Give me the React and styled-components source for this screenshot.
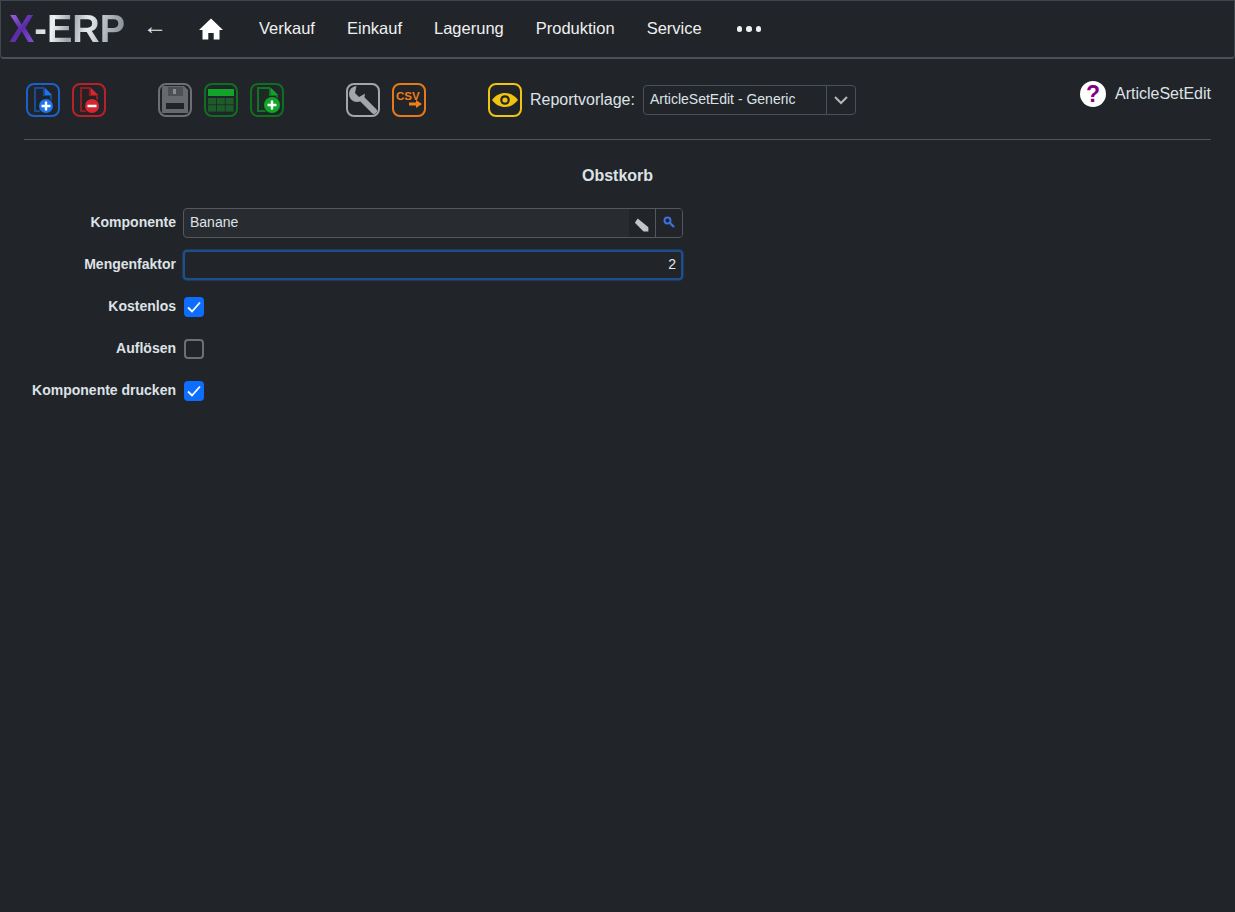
import React from 'react'
import styled, { createGlobalStyle } from 'styled-components'

const GlobalStyle = createGlobalStyle`
  html, body {
    margin: 0;
    padding: 0;
    min-height: 100%;
    background: #212529;
  }
  body {
    font-family: "Liberation Sans", Arial, sans-serif;
    color: #dee2e6;
  }
  * { box-sizing: border-box; }
`

const ICON_BG = '#212529'

// document with a round badge in the lower right corner
const DocIcon = ({ color, dim, inner, sign, left = 6, right = 24, cy = 21, r = 7 }) => {
  const cx = right - 6
  const foldX = right - 8
  return (
    <svg width="30" height="30" viewBox="0 0 30 30">
      <path d={`M${left} 2H${foldX}L${right} 10V27H${left}z`} fill={dim} />
      <path d={`M${left + 2} 4H${foldX - 1}V11H${right - 2}V17H${left + 9}V25H${left + 2}z`} fill={inner} />
      <path d={`M${foldX + 1} 3 ${right} 10H${foldX + 1}z`} fill={color} />
      <circle cx={cx} cy={cy} r={r + 1} fill={ICON_BG} />
      <circle cx={cx} cy={cy} r={r} fill={color} />
      <path d={`M${cx - 4.5} ${cy}h9`} stroke="#fff" strokeWidth="2.400" />
      {sign === 'plus' && <path d={`M${cx} ${cy - 4.5}v9`} stroke="#fff" strokeWidth="2.400" />}
    </svg>
  )
}

const SaveIcon = () => (
  <svg width="30" height="30" viewBox="0 0 30 30">
    <path d="M2 1h22l4 4v23H2z" fill="#66696d" />
    <path d="M8 2h15v9H8z" fill="#4e5054" />
    <path d="M13 4h3v5h-3z" fill="#8a8c90" />
    <path d="M6 18h18v6H6z" fill="#212529" />
  </svg>
)

const TableIcon = () => (
  <svg width="30" height="30" viewBox="0 0 30 30">
    <rect x="2" y="4" width="26" height="7" fill="#12a329" />
    {[0, 1, 2].map((col) =>
      [0, 1].map((row) => (
        <rect key={`${col}-${row}`} x={2 + col * 8.8} y={13 + row * 7.2} width="8" height="6.400" fill="#1c5c2a" />
      ))
    )}
  </svg>
)

const WrenchIcon = () => (
  <svg width="30" height="30" viewBox="0 0 30 30">
    <path d="M11 11 26 26" stroke="#a3a6aa" strokeWidth="6" strokeLinecap="round" />
    <circle cx="9" cy="9" r="8" fill="#a3a6aa" />
    <path d="M7 8 9 -1H20V7L11 12z" fill="#212529" />
  </svg>
)

const CsvIcon = () => (
  <svg width="30" height="30" viewBox="0 0 30 30">
    <text x="2" y="14.500" fontFamily="'Liberation Sans', sans-serif" fontWeight="700" fontSize="11.500" fill="#f07d16">CSV</text>
    <path d="M15 17.500h7V15l6 4-6 4v-2.500h-7z" fill="#f07d16" />
  </svg>
)

const EyeIcon = () => (
  <svg width="30" height="30" viewBox="0 0 30 30">
    <path d="M2 15C6 10 10 8 15 8s9 2 13 7c-4 5-8 7-13 7S6 20 2 15z" fill="#f1c40f" />
    <circle cx="15" cy="15" r="4.800" fill="#212529" />
    <circle cx="15" cy="15" r="2.600" fill="#f1c40f" />
  </svg>
)

const HomeIcon = () => (
  <svg width="24" height="22" viewBox="0 0 24 22">
    <path d="M12 0.500 24 12h-3.500v9.500h-5.800v-6.500H9.300v6.500H3.500V12H0z" fill="#fff" />
  </svg>
)

const PencilIcon = () => (
  <svg width="16" height="16" viewBox="0 0 15 15">
    <path d="M3.500 1.500 13.500 9.500V13.500H9L0.800 5.500z" fill="#c3c5c8" />
  </svg>
)

const SearchIcon = () => (
  <svg width="12" height="12" viewBox="0 0 12 12">
    <circle cx="4.500" cy="4.500" r="3" fill="none" stroke="#3f6fd8" strokeWidth="2" />
    <path d="M7 7l4 4" stroke="#3f6fd8" strokeWidth="2.400" />
  </svg>
)

const CheckIcon = () => (
  <svg width="16" height="16" viewBox="0 0 16 16">
    <path d="M2 8.500 6 12.500 14 3.500" fill="none" stroke="#fff" strokeWidth="1.800" />
  </svg>
)

const navItems = ['Verkauf', 'Einkauf', 'Lagerung', 'Produktion', 'Service']

export default function App() {
  return (
    <>
      <GlobalStyle />
      <Navbar>
        <Logo>
          <LogoX>X</LogoX>
          <LogoRest>-ERP</LogoRest>
        </Logo>
        <BackArrow>←</BackArrow>
        <HomeLink>
          <HomeIcon />
        </HomeLink>
        <NavList>
          {navItems.map((item) => (
            <NavItem key={item}>{item}</NavItem>
          ))}
          <NavDots>
            <i />
            <i />
            <i />
          </NavDots>
        </NavList>
      </Navbar>

      <Main>
        <Toolbar>
          <ToolGroup>
            <ToolButton $color="#1a62c9">
              <DocIcon color="#1f74ee" dim="#1c4a8a" inner="#1b2536" sign="plus" />
            </ToolButton>
            <ToolButton $color="#b8212a">
              <DocIcon color="#d9252f" dim="#8a1f26" inner="#2a2024" sign="minus" />
            </ToolButton>
          </ToolGroup>
          <ToolGroup $wide>
            <ToolButton $color="#6c6f73"><SaveIcon /></ToolButton>
            <ToolButton $color="#0f6f20"><TableIcon /></ToolButton>
            <ToolButton $color="#0f6f20">
              <DocIcon color="#12a329" dim="#14702a" inner="#1b2c22" sign="plus" left={5} right={26} cy={20} r={8} />
            </ToolButton>
          </ToolGroup>
          <ToolGroup>
            <ToolButton $color="#a3a6aa"><WrenchIcon /></ToolButton>
            <ToolButton $color="#e8791a"><CsvIcon /></ToolButton>
          </ToolGroup>
          <ReportGroup>
            <ToolButton $color="#f1c40f"><EyeIcon /></ToolButton>
            <ReportLabel>Reportvorlage:</ReportLabel>
            <ReportSelect>
              <ReportValue>ArticleSetEdit - Generic</ReportValue>
              <ReportCaret>
                <svg width="16" height="10" viewBox="0 0 16 10">
                  <path d="M2 2l6 6 6-6" fill="none" stroke="#b4b7ba" strokeWidth="2" />
                </svg>
              </ReportCaret>
            </ReportSelect>
          </ReportGroup>
          <HelpBlock>
            <HelpCircle>?</HelpCircle>
            <span>ArticleSetEdit</span>
          </HelpBlock>
        </Toolbar>

        <Divider />

        <FormTitle>Obstkorb</FormTitle>

        <Form>
          <Row>
            <Label>Komponente</Label>
            <LookupField>
              <LookupValue>Banane</LookupValue>
              <LookupEdit><PencilIcon /></LookupEdit>
              <LookupSearch><SearchIcon /></LookupSearch>
            </LookupField>
          </Row>
          <Row>
            <Label>Mengenfaktor</Label>
            <NumberField>2</NumberField>
          </Row>
          <Row>
            <Label>Kostenlos</Label>
            <Check $checked><CheckIcon /></Check>
          </Row>
          <Row>
            <Label>Auflösen</Label>
            <Check />
          </Row>
          <Row>
            <Label>Komponente drucken</Label>
            <Check $checked><CheckIcon /></Check>
          </Row>
        </Form>
      </Main>
    </>
  )
}

const Navbar = styled.nav`
  height: 59px;
  display: flex;
  align-items: center;
  background: #212529;
  border: 1px solid #41464c;
  border-bottom: 2px solid #4b5056;
  border-radius: 0 0 4px 4px;
  padding-left: 8px;
`
const Logo = styled.div`
  width: 116px;
  font-size: 38px;
  line-height: 40px;
  font-weight: 700;
  white-space: nowrap;
`
const LogoX = styled.span`
  background: linear-gradient(135deg, #9a68e0 10%, #5a2aa8 50%, #8a52d8 90%);
  -webkit-background-clip: text;
  background-clip: text;
  color: transparent;
`
const LogoRest = styled.span`
  background: linear-gradient(100deg, #c4cace 0%, #eef1f3 22%, #98a1a8 40%, #e6eaec 58%, #aeb5bb 78%, #7f878e 100%);
  -webkit-background-clip: text;
  background-clip: text;
  color: transparent;
`
const BackArrow = styled.div`
  margin-left: 18px;
  margin-right: 2px;
  margin-bottom: 6px;
  width: 20px;
  font-size: 24px;
  line-height: 24px;
  color: #e8e8e8;
`
const HomeLink = styled.div`
  margin-left: 34px;
  display: flex;
`
const NavList = styled.div`
  margin-left: 20px;
  display: flex;
  align-items: center;
`
const NavItem = styled.div`
  padding: 0 16px 2px;
  font-size: 16.500px;
  color: #f0f0f0;
`
const NavDots = styled.div`
  margin-left: 19px;
  display: flex;
  gap: 4px;
  i {
    width: 5.500px;
    height: 5.500px;
    border-radius: 50%;
    background: #f0f0f0;
  }
`
const Main = styled.main`
  padding: 24px 24px 0;
`
const Toolbar = styled.div`
  display: flex;
  align-items: flex-start;
  height: 56px;
  padding-left: 2px;
`
const ToolGroup = styled.div`
  display: flex;
  gap: 12px;
  margin-right: ${(p) => (p.$wide ? '62px' : '52px')};
`
const ToolButton = styled.div`
  width: 34px;
  height: 34px;
  flex: none;
  border: 2px solid ${(p) => p.$color};
  border-radius: 8px;
  display: flex;
  align-items: center;
  justify-content: center;
  overflow: hidden;
  svg {
    flex: none;
  }
`
const ReportGroup = styled.div`
  display: flex;
  align-items: center;
  height: 34px;
  margin-left: 10px;
`
const ReportLabel = styled.span`
  margin-left: 8px;
  font-size: 16px;
  color: #dee2e6;
`
const ReportSelect = styled.div`
  margin-left: 8px;
  width: 213px;
  height: 30px;
  display: flex;
  border: 1px solid #495057;
  border-radius: 4px;
`
const ReportValue = styled.div`
  flex: 1;
  padding-left: 6px;
  font-size: 14px;
  line-height: 26px;
  color: #dee2e6;
  border-right: 1px solid #495057;
`
const ReportCaret = styled.div`
  width: 28px;
  display: flex;
  align-items: center;
  justify-content: center;
`
const HelpBlock = styled.div`
  margin-left: auto;
  margin-top: -2px;
  display: flex;
  align-items: center;
  gap: 9px;
  height: 26px;
  font-size: 16px;
  color: #dee2e6;
`
const HelpCircle = styled.div`
  width: 26px;
  height: 26px;
  border-radius: 50%;
  background: #fff;
  color: #800080;
  font-size: 23px;
  line-height: 26px;
  font-weight: 700;
  text-align: center;
`
const Divider = styled.hr`
  margin: 0;
  border: 0;
  border-top: 1px solid #52565b;
`
const FormTitle = styled.h2`
  margin: 0;
  padding-top: 26px;
  height: 68px;
  font-size: 16px;
  line-height: 19px;
  font-weight: 700;
  text-align: center;
  color: #dee2e6;
`
const Form = styled.div`
  display: flex;
  flex-direction: column;
  gap: 12px;
`
const Row = styled.div`
  height: 30px;
  display: flex;
  align-items: center;
  gap: 7px;
`
const Label = styled.label`
  width: 152px;
  padding-bottom: 2px;
  text-align: right;
  font-size: 14px;
  font-weight: 700;
  color: #dee2e6;
  white-space: nowrap;
`
const LookupField = styled.div`
  width: 500px;
  height: 30px;
  display: flex;
  border: 1px solid #54585d;
  border-radius: 4px;
  background: #282c31;
  font-size: 14px;
`
const LookupValue = styled.div`
  flex: 1;
  padding-left: 6px;
  line-height: 27px;
  color: #dee2e6;
`
const LookupEdit = styled.div`
  width: 27px;
  background: #212529;
  border-right: 1px solid #54585d;
  display: flex;
  align-items: center;
  justify-content: center;
  padding-top: 3px;
`
const LookupSearch = styled.div`
  width: 26px;
  background: #212529;
  border-radius: 0 3px 3px 0;
  display: flex;
  align-items: center;
  justify-content: center;
  padding-bottom: 2px;
`
const NumberField = styled.div`
  width: 500px;
  height: 30px;
  padding-right: 5px;
  border: 2px solid #1f4f88;
  border-radius: 4px;
  box-shadow: 0 0 0 1px #1b3a5e;
  background: #212529;
  font-size: 14px;
  line-height: 25px;
  text-align: right;
  color: #e6e8ea;
`
const Check = styled.div`
  margin-left: 1px;
  width: 20px;
  height: 20px;
  border-radius: 4px;
  border: ${(p) => (p.$checked ? 'none' : '2px solid #6c7075')};
  background: ${(p) => (p.$checked ? '#0d6efd' : 'transparent')};
  display: flex;
  align-items: center;
  justify-content: center;
`
